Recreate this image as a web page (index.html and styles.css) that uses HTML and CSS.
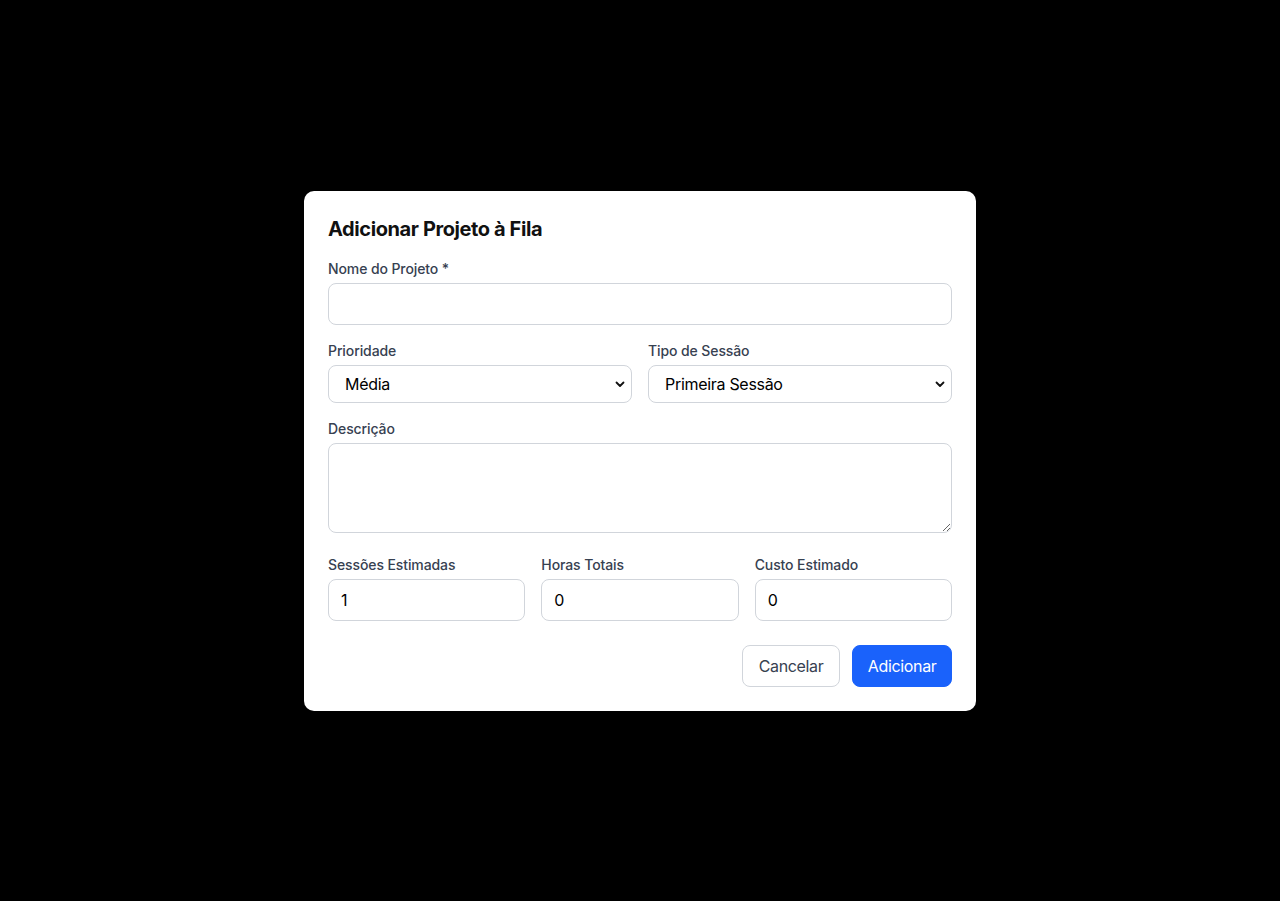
FILE: index.html
```html
<!DOCTYPE html>
<html lang="pt">
<head>
<meta charset="utf-8">
<title>Adicionar Projeto à Fila</title>
<link rel="stylesheet" href="styles.css">
</head>
<body>
<div class="overlay">
  <div class="modal">
    <h2 class="title">Adicionar Projeto à Fila</h2>
    <form class="form">
      <div class="field">
        <label class="label">Nome do Projeto *</label>
        <input class="input" type="text">
      </div>
      <div class="grid2">
        <div class="field">
          <label class="label">Prioridade</label>
          <select class="select"><option>Média</option></select>
        </div>
        <div class="field">
          <label class="label">Tipo de Sessão</label>
          <select class="select"><option>Primeira Sessão</option></select>
        </div>
      </div>
      <div class="field">
        <label class="label">Descrição</label>
        <textarea class="textarea" rows="3"></textarea>
      </div>
      <div class="grid3">
        <div class="field">
          <label class="label">Sessões Estimadas</label>
          <input class="input" type="text" value="1">
        </div>
        <div class="field">
          <label class="label">Horas Totais</label>
          <input class="input" type="text" value="0">
        </div>
        <div class="field">
          <label class="label">Custo Estimado</label>
          <input class="input" type="text" value="0">
        </div>
      </div>
      <div class="actions">
        <button type="button" class="btn btn-secondary">Cancelar</button>
        <button type="button" class="btn btn-primary">Adicionar</button>
      </div>
    </form>
  </div>
</div>
</body>
</html>
```
FILE: styles.css
```css
* { box-sizing: border-box; }
html, body {
  margin: 0;
  padding: 0;
  height: 100%;
  background: #000;
  font-family: Inter, "Liberation Sans", sans-serif;
}
.overlay {
  height: 901px;
  display: flex;
  align-items: center;
  justify-content: center;
}
.modal {
  width: 672px;
  background: #fff;
  border-radius: 10px;
  padding: 24px;
}
.title {
  margin: 0 0 16px;
  font-size: 20px;
  line-height: 28px;
  font-weight: 700;
  color: #111;
  letter-spacing: -0.4px;
}
.form {
  display: flex;
  flex-direction: column;
  gap: 16px;
}
.field {
  display: flex;
  flex-direction: column;
  gap: 4px;
  min-width: 0;
}
.label {
  font-size: 14px;
  line-height: 20px;
  font-weight: 500;
  color: #374151;
  letter-spacing: -0.1px;
}
.input, .select, .textarea {
  width: 100%;
  border: 1px solid #d1d5db;
  border-radius: 8px;
  font-family: Inter, "Liberation Sans", sans-serif;
  font-size: 16px;
  color: #000;
  background: #fff;
  outline: none;
  letter-spacing: -0.3px;
}
.input {
  height: 42px;
  padding: 8px 12px;
  line-height: 24px;
}
.select {
  height: 38px;
  padding: 0 30px 0 16px;
  appearance: none;
  -webkit-appearance: none;
  background-image: url("data:image/svg+xml,%3Csvg xmlns='http://www.w3.org/2000/svg' width='10' height='8' viewBox='0 0 10 8'%3E%3Cpath d='M1.5 2.5 L5 6 L8.5 2.5' fill='none' stroke='%23111' stroke-width='1.8' stroke-linecap='round' stroke-linejoin='round'/%3E%3C/svg%3E");
  background-repeat: no-repeat;
  background-position: right 6px center;
  background-size: 10px 8px;
}
.textarea {
  display: block;
  height: 90px;
  padding: 8px 12px;
  line-height: 24px;
  resize: vertical;
}
.grid2 {
  display: grid;
  grid-template-columns: 1fr 1fr;
  gap: 16px;
}
.grid3 {
  display: grid;
  grid-template-columns: 1fr 1fr 1fr;
  gap: 16px;
  margin-top: 6px;
}
.actions {
  display: flex;
  justify-content: flex-end;
  gap: 12px;
  margin-top: 8px;
}
.btn {
  height: 42px;
  padding: 0 16px;
  border-radius: 8px;
  font-family: Inter, "Liberation Sans", sans-serif;
  font-size: 16px;
  line-height: 24px;
  letter-spacing: -0.35px;
  cursor: pointer;
}
.btn-secondary {
  background: #fff;
  border: 1px solid #d1d5db;
  color: #374151;
}
.btn-primary {
  padding: 0 14.5px;
  background: #1a62fb;
  border: 1px solid #1a62fb;
  color: #fff;
}
```
